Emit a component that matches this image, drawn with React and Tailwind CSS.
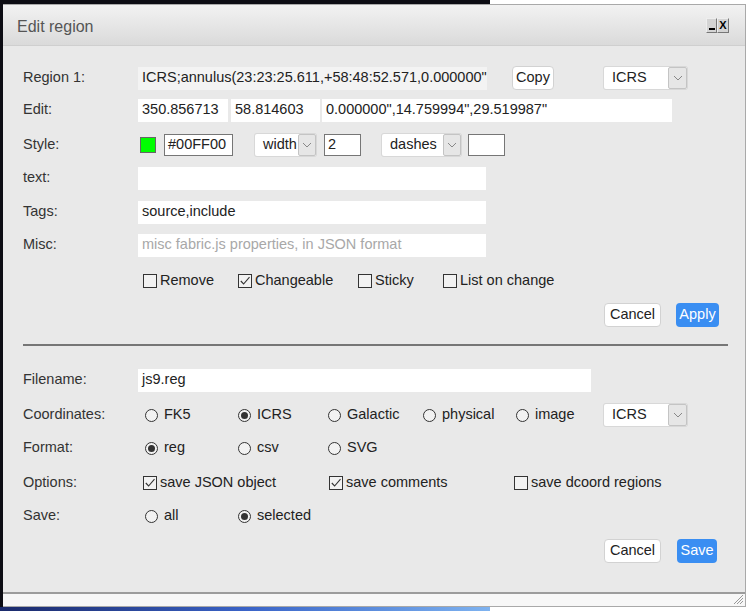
import React from 'react';

const Label = ({ children }) => (
    <div className="w-[115px] shrink-0 text-[#333]">{children}</div>
);

const Chevron = () => (
    <svg width="10" height="6" viewBox="0 0 10 6">
        <polyline points="1,1 5,5 9,1" fill="none" stroke="#888" strokeWidth="1" />
    </svg>
);

const Select = ({ value, width, arrow = 19 }) => (
    <div className="flex h-[22px] bg-white rounded-[2px] shadow-[0_0_0_1px_#d8d8d8]" style={{ width }}>
        <div className="flex-1 flex items-center pl-[8px] text-[#222]">{value}</div>
        <div className="flex items-center justify-center bg-[#e6e6e6] border border-[#c4c4c4] rounded-[2px]" style={{ width: arrow }}>
            <Chevron />
        </div>
    </div>
);

const Check = ({ checked, label, width }) => (
    <div className="flex items-center" style={{ width }}>
        <span className="w-[14px] h-[14px] border border-[#333] bg-[#f2f2f2] flex items-center justify-center shrink-0">
            {checked && (
                <svg width="12" height="12" viewBox="0 0 12 12">
                    <polyline points="1.8,6 4.6,9 10.5,2.2" fill="none" stroke="#333" strokeWidth="1.1" />
                </svg>
            )}
        </span>
        <span className="ml-[3px] text-[#222]">{label}</span>
    </div>
);

const Radio = ({ checked, label, width }) => (
    <div className="flex items-center" style={{ width }}>
        <span className="w-[13px] h-[13px] rounded-full border border-[#333] bg-[#f2f2f2] flex items-center justify-center shrink-0">
            {checked && <span className="w-[7px] h-[7px] rounded-full bg-[#333]" />}
        </span>
        <span className="ml-[6px] text-[#222]">{label}</span>
    </div>
);

const Field = ({ width, children, placeholder, readOnly }) => (
    <div
        className={`h-[23px] flex items-center pl-[4px] overflow-hidden whitespace-nowrap ${readOnly ? 'bg-[#f3f3f3]' : 'bg-white'} ${placeholder ? 'text-[#a8a8a8]' : 'text-[#222]'}`}
        style={{ width }}
    >
        {children}
    </div>
);

const BoxField = ({ width, children }) => (
    <div className="h-[22px] flex items-center pl-[3px] bg-white border border-[#767676] text-[#222]" style={{ width }}>
        {children}
    </div>
);

const Button = ({ children, primary, width }) => (
    <div
        className={`h-[24px] flex items-center justify-center rounded-[4px] ${primary ? 'bg-[#3a8ef2] text-white' : 'bg-white text-[#222] border border-[#d2d2d2]'}`}
        style={{ width }}
    >
        {children}
    </div>
);

export default function App() {
    return (
        <div className="relative w-[749px] h-[611px] bg-white overflow-hidden font-['Liberation_Sans',Arial,sans-serif] text-[14.5px]">
            {/* window behind the dialog */}
            <div className="absolute left-0 top-0 w-[490px] h-[611px] bg-[#0d0d14]" />
            <div className="absolute left-0 bottom-0 w-[490px] h-[4px] bg-gradient-to-r from-[#1b2a6b] via-[#3a63c7] to-[#7fb3f0]" />

            <div className="relative ml-[3px] mt-[4px] w-[743px] h-[603px] flex flex-col border border-[#a9a9a9] border-l-0">
                {/* Title bar */}
                <div className="h-[41px] shrink-0 flex items-center justify-between bg-gradient-to-b from-[#f2f2f2] to-[#dadada] border-b border-[#cfcfcf] pl-[14px] pr-[16px]">
                    <span className="text-[16px] text-[#555] mt-[4px]">Edit region</span>
                    <div className="flex">
                        <div className="w-[11px] h-[15px] bg-[#d4d4d4] border border-[#777] border-t-[#eee] border-l-[#eee] flex items-end justify-center">
                            <span className="w-[6px] h-[2px] bg-black mb-[2px]" />
                        </div>
                        <div className="w-[12px] h-[15px] bg-[#d4d4d4] border border-[#777] border-t-[#eee] border-l-[#eee] flex items-center justify-center text-[11px] font-bold leading-none">X</div>
                    </div>
                </div>

                {/* Body */}
                <div className="flex-1 bg-[#e9e9e9] pl-[20px] pr-[17px] pt-[20px]">
                    <div className="flex items-center h-[24px]">
                        <Label>Region 1:</Label>
                        <Field width={349} readOnly>ICRS;annulus(23:23:25.611,+58:48:52.571,0.000000"</Field>
                        <div className="ml-[25px]"><Button width={42}>Copy</Button></div>
                        <div className="ml-[50px]"><Select value="ICRS" width={83} /></div>
                    </div>

                    <div className="flex items-center h-[24px] mt-[8px]">
                        <Label>Edit:</Label>
                        <Field width={90}>350.856713</Field>
                        <div className="ml-[3px]"><Field width={89}>58.814603</Field></div>
                        <div className="ml-[2px]"><Field width={350}>0.000000",14.759994",29.519987"</Field></div>
                    </div>

                    <div className="flex items-center h-[24px] mt-[11px]">
                        <Label>Style:</Label>
                        <span className="ml-[2px] w-[16px] h-[16px] bg-[#00ff00] border border-[#666]" />
                        <div className="ml-[8px]"><BoxField width={69}>#00FF00</BoxField></div>
                        <div className="ml-[22px]"><Select value="width" width={61} arrow={18} /></div>
                        <div className="ml-[8px]"><BoxField width={37}>2</BoxField></div>
                        <div className="ml-[21px]"><Select value="dashes" width={79} arrow={18} /></div>
                        <div className="ml-[7px]"><BoxField width={37}></BoxField></div>
                    </div>

                    <div className="flex items-center h-[24px] mt-[9px]">
                        <Label>text:</Label>
                        <Field width={348}></Field>
                    </div>

                    <div className="flex items-center h-[24px] mt-[10px]">
                        <Label>Tags:</Label>
                        <Field width={348}>source,include</Field>
                    </div>

                    <div className="flex items-center h-[24px] mt-[9px]">
                        <Label>Misc:</Label>
                        <Field width={348} placeholder>misc fabric.js properties, in JSON format</Field>
                    </div>

                    <div className="flex items-center h-[24px] mt-[12px] pl-[120px]">
                        <Check label="Remove" width={95} />
                        <Check label="Changeable" checked width={120} />
                        <Check label="Sticky" width={85} />
                        <Check label="List on change" />
                    </div>

                    <div className="flex items-center justify-end h-[24px] mt-[10px] pr-[9px]">
                        <Button width={57}>Cancel</Button>
                        <div className="ml-[15px]"><Button primary width={43}>Apply</Button></div>
                    </div>

                    <div className="mt-[17px] border-t-2 border-[#767676]" />

                    <div className="flex items-center h-[24px] mt-[22px]">
                        <Label>Filename:</Label>
                        <Field width={453}>js9.reg</Field>
                    </div>

                    <div className="flex items-center h-[24px] mt-[11px]">
                        <Label>Coordinates:</Label>
                        <div className="flex items-center pl-[7px]">
                            <Radio label="FK5" width={93} />
                            <Radio label="ICRS" checked width={90} />
                            <Radio label="Galactic" width={95} />
                            <Radio label="physical" width={93} />
                            <Radio label="image" width={88} />
                        </div>
                        <Select value="ICRS" width={83} />
                    </div>

                    <div className="flex items-center h-[24px] mt-[9px]">
                        <Label>Format:</Label>
                        <div className="flex items-center pl-[7px]">
                            <Radio label="reg" checked width={93} />
                            <Radio label="csv" width={90} />
                            <Radio label="SVG" />
                        </div>
                    </div>

                    <div className="flex items-center h-[24px] mt-[11px]">
                        <Label>Options:</Label>
                        <div className="flex items-center pl-[5px]">
                            <Check label="save JSON object" checked width={186} />
                            <Check label="save comments" checked width={185} />
                            <Check label="save dcoord regions" />
                        </div>
                    </div>

                    <div className="flex items-center h-[24px] mt-[9px]">
                        <Label>Save:</Label>
                        <div className="flex items-center pl-[7px]">
                            <Radio label="all" width={93} />
                            <Radio label="selected" checked />
                        </div>
                    </div>

                    <div className="flex items-center justify-end h-[24px] mt-[11px] pr-[11px]">
                        <Button width={57}>Cancel</Button>
                        <div className="ml-[16px]"><Button primary width={40}>Save</Button></div>
                    </div>
                </div>

                {/* Footer with resize grip */}
                <div className="h-[14px] shrink-0 bg-[#f7f7f7] border-t-2 border-[#9c9c9c] flex justify-end items-end">
                    <svg width="11" height="11" viewBox="0 0 11 11" className="mr-[1px] mb-[1px]">
                        <line x1="10" y1="1" x2="1" y2="10" stroke="#999" strokeWidth="1" />
                        <line x1="10" y1="4" x2="4" y2="10" stroke="#999" strokeWidth="1" />
                        <line x1="10" y1="7" x2="7" y2="10" stroke="#999" strokeWidth="1" />
                    </svg>
                </div>
            </div>
        </div>
    );
}
